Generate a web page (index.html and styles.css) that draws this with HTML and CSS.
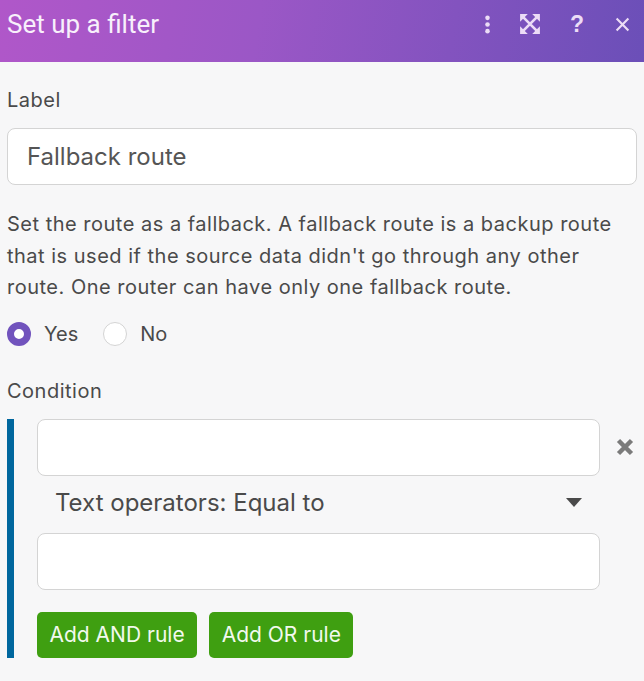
FILE: index.html
```html
<!DOCTYPE html>
<html lang="en">
<head>
	<meta charset="utf-8" />
	<title>Set up a filter</title>
	<link rel="stylesheet" href="styles.css">
</head>
<body>
<header class="titlebar">
	<h1 class="title">Set up a filter</h1>
	<div class="tools">
		<svg class="tool tool-dots" viewBox="0 0 6 20"><circle cx="3" cy="3" r="2.4"/><circle cx="3" cy="10" r="2.4"/><circle cx="3" cy="17" r="2.4"/></svg>
		<svg class="tool tool-expand" viewBox="0 0 20 20"><path class="arrow-heads" d="M1 8V1h7zM12 1h7v7zM19 12v7h-7zM8 19H1v-7z"/><path class="arrow-lines" d="M4 4l12 12M16 4L4 16"/></svg>
		<span class="tool-help">?</span>
		<svg class="tool tool-close" viewBox="0 0 14 14"><path d="M1.500 1.500l11 11M12.500 1.500l-11 11"/></svg>
	</div>
</header>
<main class="content">
	<label class="field-label">Label</label>
	<div class="input input-label">Fallback route</div>
	<p class="help">Set the route as a fallback. A fallback route is a backup route that is used if the source data didn't go through any other route. One router can have only one fallback route.</p>
	<div class="radios">
		<span class="radio radio-on"></span><span class="radio-text">Yes</span>
		<span class="radio"></span><span class="radio-text">No</span>
	</div>
	<label class="field-label cond-label">Condition</label>
	<section class="condition">
		<div class="rule">
			<div class="rule-top">
				<div class="input"></div>
				<svg class="remove" viewBox="0 0 18 18"><path d="M2.500 2.500l13 13M15.500 2.500l-13 13"/></svg>
			</div>
			<div class="operator">
				<span>Text operators: Equal to</span>
				<span class="caret"></span>
			</div>
			<div class="input input-value"></div>
		</div>
		<div class="buttons">
			<button class="btn">Add AND rule</button>
			<button class="btn">Add OR rule</button>
		</div>
	</section>
</main>
</body>
</html>
```
FILE: styles.css
```css
*{
	box-sizing:border-box;
}

html,body{
	margin:0;
	height:100%;
}

body{
	background-color:#f7f7f8;
	color:#4a4a4a;
	font-family:"Inter","Noto Sans",sans-serif;
	font-size:20px;
	overflow:hidden;
}

.titlebar{
	height:62px;
	padding:0 14px 14px 7px;
	display:flex;
	align-items:center;
	justify-content:space-between;
	background:linear-gradient(100deg,#b057c9 0%,#9b57c6 40%,#6b4fb8 100%);
}

.title{
	margin:0;
	font-family:Roboto,sans-serif;
	font-size:26px;
	font-weight:400;
	color:#f8f0fb;
}

.tools{
	display:flex;
	align-items:center;
}

.tool{
	display:block;
}

.tool-dots{
	width:7px;
	height:19px;
	fill:#ecdcf6;
	margin-right:28px;
}

.tool-expand{
	width:22px;
	height:22px;
	margin-right:29px;
}

.arrow-heads{
	fill:#ecdcf6;
}

.arrow-lines{
	fill:none;
	stroke:#ecdcf6;
	stroke-width:2.400;
}

.tool-help{
	font-family:"Liberation Sans",sans-serif;
	font-size:23px;
	font-weight:700;
	line-height:20px;
	color:#ecdcf6;
	margin-right:31px;
}

.tool-close{
	width:15px;
	height:15px;
	fill:none;
	stroke:#ecdcf6;
	stroke-width:2;
}

.content{
	padding:25px 7px 0;
}

.field-label{
	display:block;
	line-height:26px;
	letter-spacing:.5px;
}

.input{
	height:57px;
	flex:1;
	background-color:#fff;
	border:1px solid #d4d4d4;
	border-radius:8px;
}

.input-label{
	margin-top:15px;
	padding:0 19px;
	line-height:55px;
	font-size:24px;
	color:#555;
}

.help{
	margin:24px 0 0;
	line-height:31.500px;
	letter-spacing:.5px;
}

.radios{
	display:flex;
	align-items:center;
	margin-top:15px;
	height:30px;
}

.radio{
	width:24px;
	height:24px;
	border-radius:50%;
	background-color:#fff;
	border:1px solid #d4d4d4;
}

.radio-on{
	border:7px solid #7153bd;
}

.radio-text{
	margin-left:13px;
	margin-right:25px;
}

.cond-label{
	margin-top:29px;
}

.condition{
	margin-top:15px;
	padding-left:23px;
	border-left:7px solid #00679e;
	height:239px;
}

.rule-top{
	display:flex;
	align-items:center;
}

.remove{
	width:18px;
	height:18px;
	margin:0 3px 0 16px;
	fill:none;
	stroke:#7b7b7b;
	stroke-width:4.500;
}

.operator{
	height:57px;
	margin-right:37px;
	padding:0 18px 3px;
	display:flex;
	align-items:center;
	justify-content:space-between;
	font-size:24px;
}

.caret{
	width:0;
	height:0;
	border-left:8px solid transparent;
	border-right:8px solid transparent;
	border-top:9px solid #4a4a4a;
}

.input-value{
	flex:none;
	margin-right:37px;
}

.buttons{
	display:flex;
	gap:12px;
	margin-top:22px;
}

.btn{
	height:46px;
	padding:0 12.500px;
	background-color:#3f9f11;
	color:#f2f9ee;
	border:0;
	border-radius:5px;
	font-family:"Inter","Noto Sans",sans-serif;
	font-size:21px;
}
```
